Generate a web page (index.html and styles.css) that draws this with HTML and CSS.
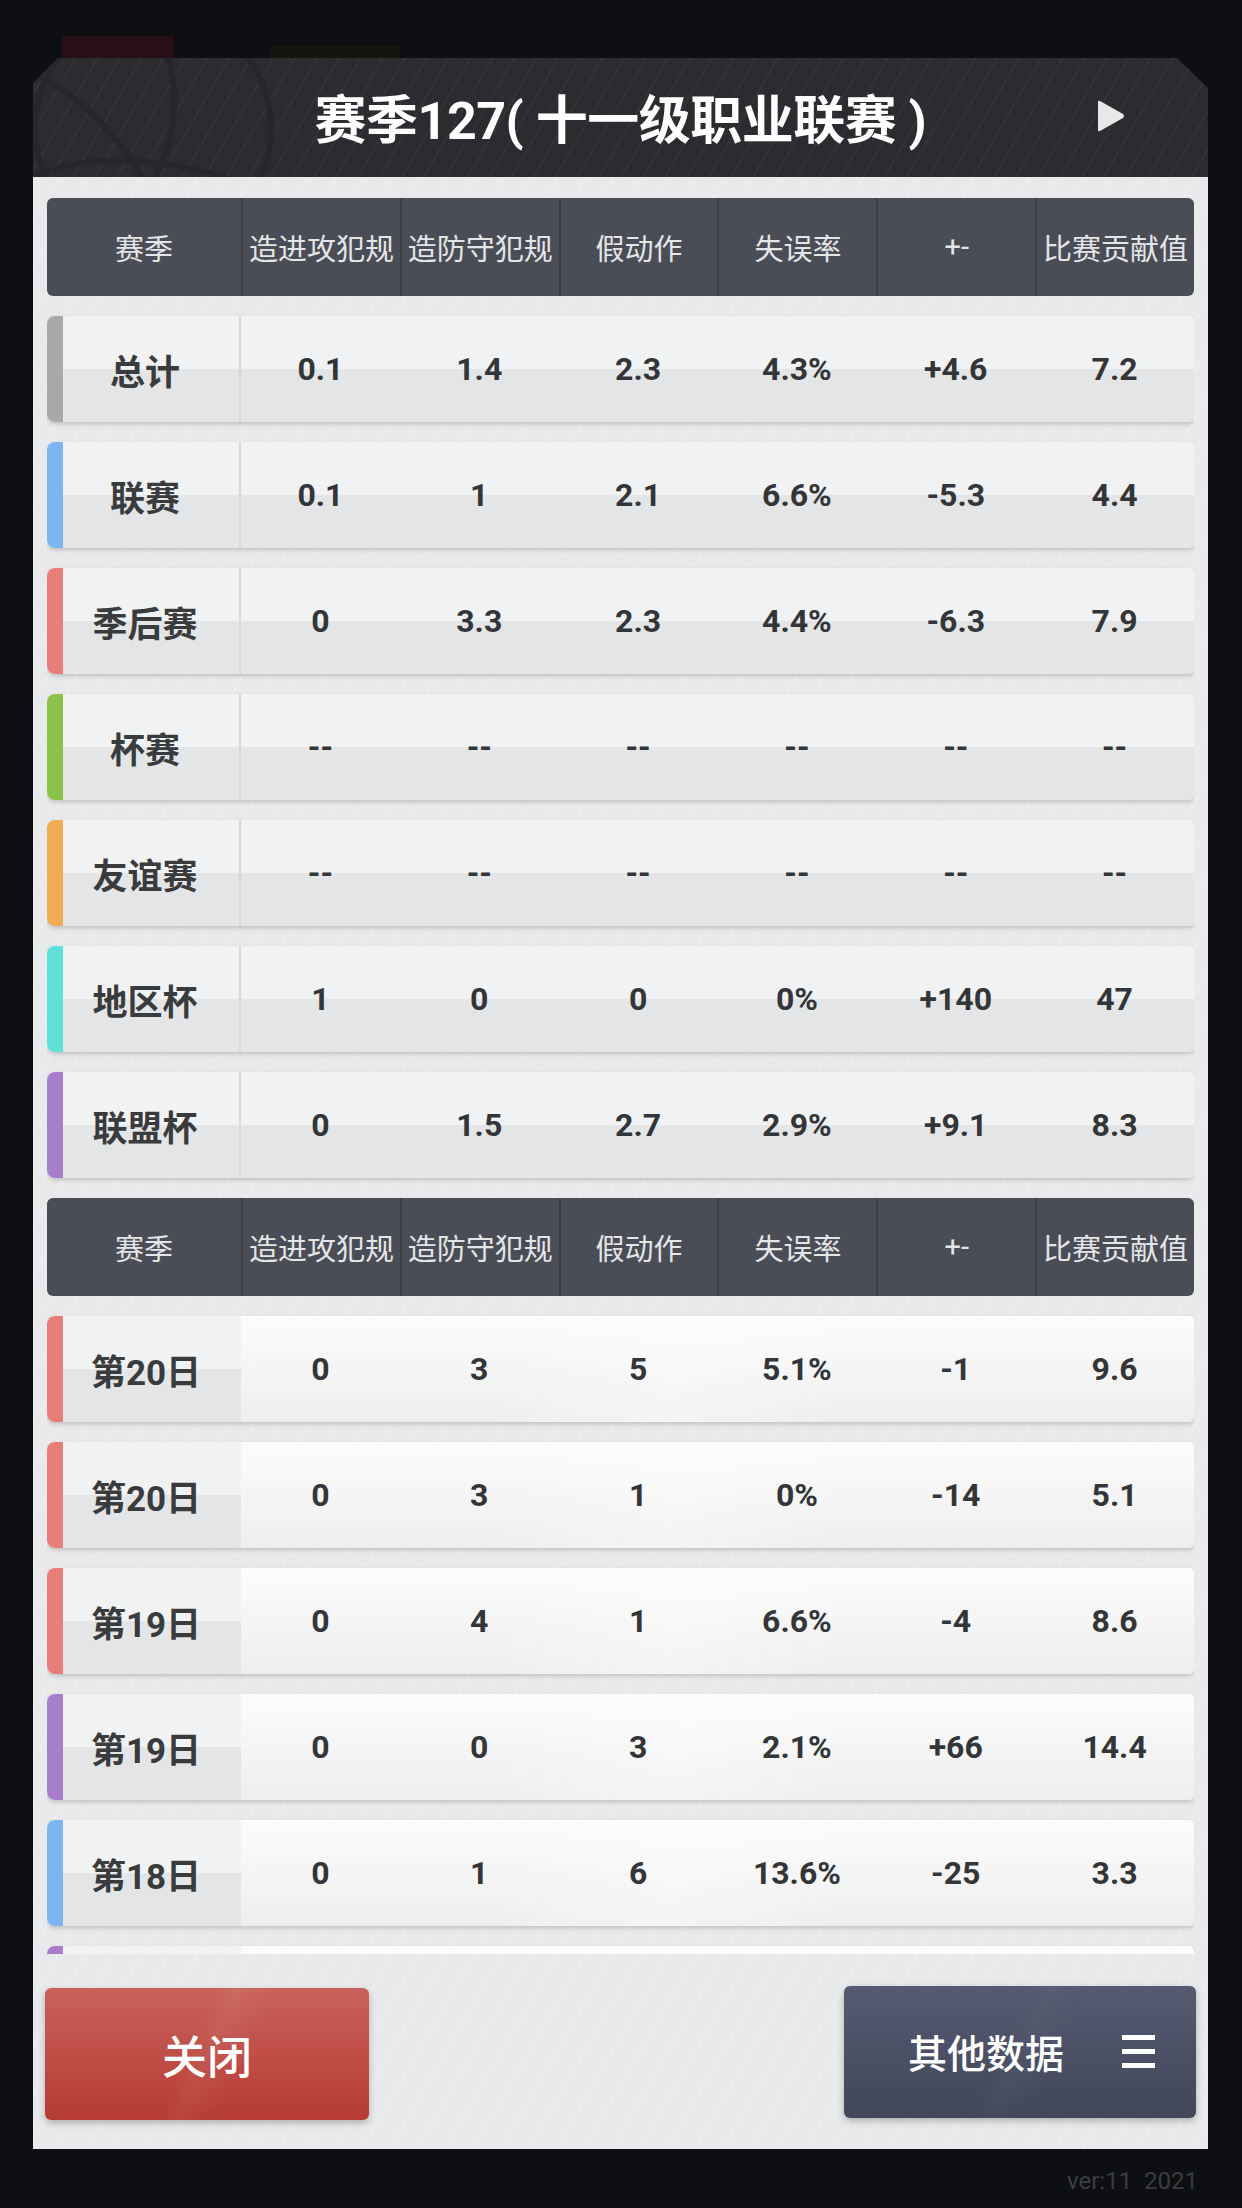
FILE: index.html
```html
<!DOCTYPE html>
<html lang="zh">
<head>
    <meta charset="UTF-8">
    <meta name="viewport" content="width=device-width, initial-scale=1.0">
    <title>赛季数据</title>
    <link rel="stylesheet" href="styles.css">
</head>
<body>
    <div class="panel">
        <div class="titlebar">
            <svg class="ball" width="260" height="119" viewBox="0 0 260 119">
                <circle cx="120" cy="70" r="118" fill="none" stroke="#25272b" stroke-width="6"/>
                <path d="M-10 10 C 60 40, 120 110, 140 200" fill="none" stroke="#25272b" stroke-width="6"/>
                <path d="M120 -40 C 150 20, 150 80, 110 140" fill="none" stroke="#25272b" stroke-width="6"/>
                <path d="M0 120 C 60 90, 160 100, 240 140" fill="none" stroke="#25272b" stroke-width="6"/>
            </svg>
            <div class="title">赛季127( 十一级职业联赛 )</div>
            <svg class="play" width="28" height="34" viewBox="0 0 28 34">
                <path d="M3 2 L26 15 Q28 17 26 19 L3 32 Q1 33 1 31 L1 3 Q1 1 3 2 Z" fill="#e8e8e8"/>
            </svg>
        </div>
        <div class="content">
            <div class="scroll">
                <div class="table-head">
                    <div>赛季</div><div>造进攻犯规</div><div>造防守犯规</div><div>假动作</div><div>失误率</div><div>+-</div><div>比赛贡献值</div>
                </div>
                <div class="row">
                    <div class="bar grey"></div><div class="label">总计</div>
                    <div>0.1</div><div>1.4</div><div>2.3</div><div>4.3%</div><div>+4.6</div><div>7.2</div>
                </div>
                <div class="row">
                    <div class="bar blue"></div><div class="label">联赛</div>
                    <div>0.1</div><div>1</div><div>2.1</div><div>6.6%</div><div>-5.3</div><div>4.4</div>
                </div>
                <div class="row">
                    <div class="bar red"></div><div class="label">季后赛</div>
                    <div>0</div><div>3.3</div><div>2.3</div><div>4.4%</div><div>-6.3</div><div>7.9</div>
                </div>
                <div class="row">
                    <div class="bar green"></div><div class="label">杯赛</div>
                    <div>--</div><div>--</div><div>--</div><div>--</div><div>--</div><div>--</div>
                </div>
                <div class="row">
                    <div class="bar orange"></div><div class="label">友谊赛</div>
                    <div>--</div><div>--</div><div>--</div><div>--</div><div>--</div><div>--</div>
                </div>
                <div class="row">
                    <div class="bar cyan"></div><div class="label">地区杯</div>
                    <div>1</div><div>0</div><div>0</div><div>0%</div><div>+140</div><div>47</div>
                </div>
                <div class="row">
                    <div class="bar purple"></div><div class="label">联盟杯</div>
                    <div>0</div><div>1.5</div><div>2.7</div><div>2.9%</div><div>+9.1</div><div>8.3</div>
                </div>

                <div class="table-head">
                    <div>赛季</div><div>造进攻犯规</div><div>造防守犯规</div><div>假动作</div><div>失误率</div><div>+-</div><div>比赛贡献值</div>
                </div>
                <div class="row game">
                    <div class="bar red"></div><div class="label">第20日</div>
                    <div>0</div><div>3</div><div>5</div><div>5.1%</div><div>-1</div><div>9.6</div>
                </div>
                <div class="row game">
                    <div class="bar red"></div><div class="label">第20日</div>
                    <div>0</div><div>3</div><div>1</div><div>0%</div><div>-14</div><div>5.1</div>
                </div>
                <div class="row game">
                    <div class="bar red"></div><div class="label">第19日</div>
                    <div>0</div><div>4</div><div>1</div><div>6.6%</div><div>-4</div><div>8.6</div>
                </div>
                <div class="row game">
                    <div class="bar purple"></div><div class="label">第19日</div>
                    <div>0</div><div>0</div><div>3</div><div>2.1%</div><div>+66</div><div>14.4</div>
                </div>
                <div class="row game">
                    <div class="bar blue"></div><div class="label">第18日</div>
                    <div>0</div><div>1</div><div>6</div><div>13.6%</div><div>-25</div><div>3.3</div>
                </div>
                <div class="row game">
                    <div class="bar purple"></div><div class="label"></div>
                    <div></div><div></div><div></div><div></div><div></div><div></div>
                </div>
            </div>
            <div class="footer">
                <div class="btn btn-close">关闭</div>
                <div class="btn btn-more">
                    <span>其他数据</span>
                    <svg width="33" height="33" viewBox="0 0 33 33">
                        <rect x="0" y="0" width="33" height="5" fill="#fff"/>
                        <rect x="0" y="14" width="33" height="5" fill="#fff"/>
                        <rect x="0" y="28" width="33" height="5" fill="#fff"/>
                    </svg>
                </div>
            </div>
        </div>
    </div>
    <div class="version">ver:11&nbsp;&nbsp;2021</div>
</body>
</html>
```
FILE: styles.css
```css
body {
    margin: 0;
    width: 1242px;
    height: 2208px;
    overflow: hidden;
    font-family: Roboto, "Noto Sans CJK SC", sans-serif;
    background:
        linear-gradient(#2a0e15, #2a0e15) 62px 36px / 112px 24px no-repeat,
        linear-gradient(#15140f, #15140f) 270px 46px / 130px 12px no-repeat,
        #0e0f12;
}
.panel {
    margin: 58px 0 0 33px;
    width: 1175px;
}
.titlebar {
    position: relative;
    height: 119px;
    display: grid;
    grid-template-columns: 1fr auto 1fr;
    align-items: center;
    background:
        repeating-linear-gradient(120deg, rgba(255,255,255,0) 0 17px, rgba(255,255,255,0.035) 17px 19px),
        #2a2c30;
    clip-path: polygon(25px 0, calc(100% - 31px) 0, 100% 30px, 100% 100%, 0 100%, 0 25px);
    overflow: hidden;
}
.ball {
    position: absolute;
    left: 0;
    top: 0;
}
.title {
    grid-column: 2;
    position: relative;
    color: #fff;
    font-size: 52px;
    font-weight: 700;
    letter-spacing: -0.5px;
    padding-bottom: 2px;
}
.play {
    grid-column: 3;
    justify-self: end;
    margin-right: 83px;
    margin-top: -3px;
}
.content {
    height: 1972px;
    box-sizing: border-box;
    padding: 21px 14px 0 14px;
    background:
        repeating-linear-gradient(120deg, rgba(255,255,255,0) 0 22px, rgba(255,255,255,0.18) 22px 24px),
        #e8e9eb;
    display: flex;
    flex-direction: column;
}
.scroll {
    height: 1756px;
    overflow: hidden;
    display: flex;
    flex-direction: column;
    gap: 20px;
}
.table-head {
    flex: none;
    height: 98px;
    display: grid;
    grid-template-columns: 194px repeat(6, 1fr);
    background: #4a4d56;
    border-radius: 6px;
    overflow: hidden;
}
.table-head div {
    display: flex;
    align-items: center;
    justify-content: center;
    color: #e4e5e7;
    font-size: 29px;
    white-space: nowrap;
    border-left: 2px solid #3c3e45;
}
.table-head div:first-child {
    border-left: none;
}
.row {
    flex: none;
    height: 106px;
    display: grid;
    grid-template-columns: 16px 178px repeat(6, 1fr);
    border-radius: 8px 5px 5px 8px;
    overflow: hidden;
    background: linear-gradient(#f1f2f3 0 50%, #e3e5e6 50% 100%);
    box-shadow: 0 2px 4px rgba(0,0,0,0.18);
}
.row div {
    display: flex;
    align-items: center;
    justify-content: center;
    color: #333538;
    font-size: 32px;
    font-weight: 700;
}
.row .label {
    font-size: 35px;
    color: #3a3b3d;
    border-right: 2px solid #d6d8da;
    padding-right: 12px;
}
.row.game {
    background:
        linear-gradient(110deg, rgba(255,255,255,0) 40%, rgba(255,255,255,0.35) 55%, rgba(255,255,255,0) 70%),
        linear-gradient(#fcfcfc, #eeeeee);
}
.row.game .label {
    background: linear-gradient(#f1f2f3 0 50%, #e3e5e6 50% 100%);
    border-right: none;
}
.bar.grey { background: #a9a9a9; }
.bar.blue { background: #7db5f1; }
.bar.red { background: #e87e7a; }
.bar.green { background: #8bc34a; }
.bar.orange { background: #f2aa54; }
.bar.cyan { background: #60e0d8; }
.bar.purple { background: #a87dcb; }
.footer {
    flex: 1;
    display: flex;
    justify-content: space-between;
    align-items: center;
    margin: 0 -14px 0 -15px;
    padding: 0 12px 0 13px;
}
.btn {
    height: 132px;
    border-radius: 6px;
    display: flex;
    align-items: center;
    color: #fff;
    box-shadow: 0 3px 7px rgba(0,0,0,0.25);
}
.btn-close {
    width: 324px;
    justify-content: center;
    font-size: 45px;
    font-weight: 500;
    margin-top: 5px;
    background:
        linear-gradient(115deg, rgba(255,255,255,0) 45%, rgba(255,255,255,0.05) 50%, rgba(255,255,255,0) 60%),
        linear-gradient(#c9625b, #b63b34);
}
.btn-more {
    width: 352px;
    box-sizing: border-box;
    padding-left: 64px;
    gap: 58px;
    font-size: 39px;
    font-weight: 500;
    background:
        linear-gradient(115deg, rgba(255,255,255,0) 45%, rgba(255,255,255,0.025) 50%, rgba(255,255,255,0) 60%),
        linear-gradient(#555a71, #41465a);
}
.btn-more span {
    padding-bottom: 2px;
}
.version {
    margin: 18px 44px 0 0;
    text-align: right;
    color: #3b3d42;
    font-size: 24px;
}
```
